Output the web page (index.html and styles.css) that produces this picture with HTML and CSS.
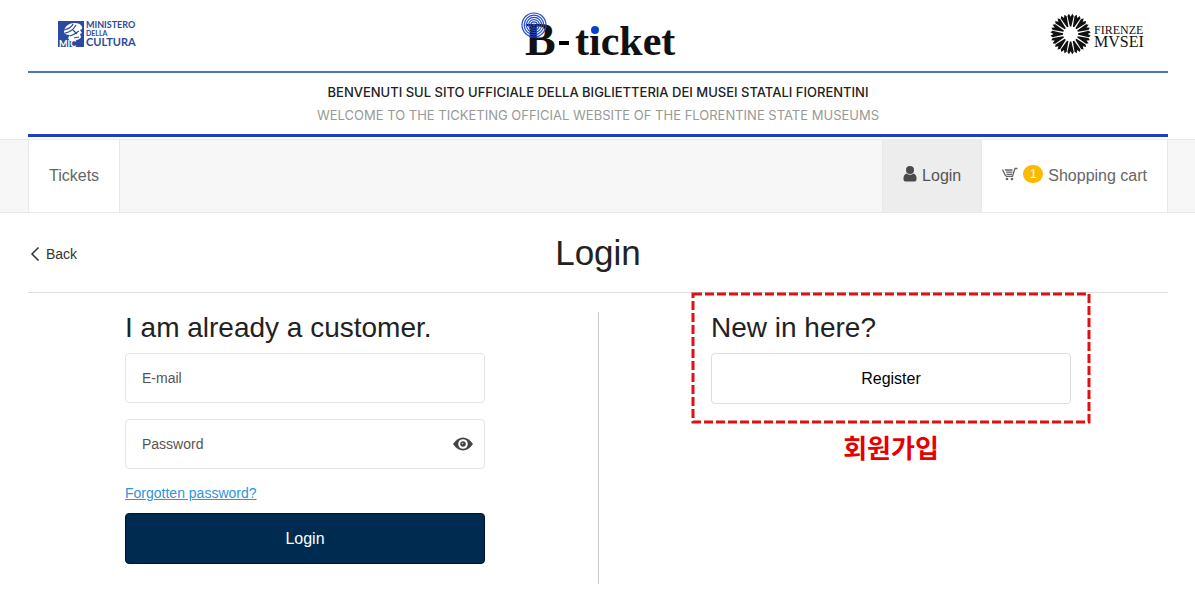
FILE: index.html
```html
<!DOCTYPE html>
<html lang="en">
  <head>
    <meta charset="UTF-8" />
    <meta name="viewport" content="width=device-width, initial-scale=1.0" />
    <title>B-ticket - Login</title>
    <link rel="stylesheet" href="styles.css">
  </head>
  <body>
    <header class="container">
      <div class="logos">
        <svg class="logo-mic" width="90" height="36" viewBox="0 0 90 36" role="img" aria-label="Ministero della Cultura">
          <rect x="6" y="3" width="26" height="26" fill="#2b4ba0" />
          <path d="M12 13c1-5 5-8 11-8 5 0 8 3 7 6l-2 1 2 3-2 1 1 3c-1 3-4 2-6 4h-5l-2-3 2-3c-3 0-6-1-6-4z" fill="#fff" />
          <path d="M12 12c4-1 8-3 9-6M13 15c5-1 9-4 11-8M18 18c4-1 7-4 9-5M21 12l4 4M22 20l5-1" fill="none" stroke="#2b4ba0" stroke-width="1.2" />
          <text class="mic-short" x="7" y="29">MIC</text>
          <text class="mic-small" x="34" y="10">MINISTERO</text>
          <text class="mic-tiny" x="34" y="18">DELLA</text>
          <text class="mic-large" x="34" y="28">CULTURA</text>
        </svg>
        <svg class="logo-ticket" width="160" height="64" viewBox="0 0 160 64" role="img" aria-label="B-ticket">
          <text class="ticket-cap" x="6" y="51">B</text>
          <rect x="40" y="37" width="10" height="4" />
          <text class="ticket-text" x="56" y="51">ticket</text>
          <rect x="70" y="19" width="12" height="11" fill="#fff" />
          <circle cx="76" cy="26" r="4" fill="#0b3fd0" />
          <g fill="none" stroke="#2449d4" stroke-width="1.2">
            <circle cx="15" cy="21" r="12" />
            <circle cx="15" cy="21" r="9.800" />
            <circle cx="15" cy="21" r="7.600" />
            <circle cx="15" cy="21" r="5.400" />
            <circle cx="15" cy="21" r="3.200" />
            <circle cx="15" cy="21" r="1" />
          </g>
        </svg>
        <svg class="logo-firenze" width="96" height="48" viewBox="0 0 96 48" role="img" aria-label="Firenze Musei">
          <defs>
            <path id="ray" d="M19.900 14.500L17.400 4L18.900 1.800L20.600 4.800L22.300 1.800L23.800 4L21.300 14.500z" />
          </defs>
          <g fill="#111">
            <use href="#ray" />
            <use href="#ray" transform="rotate(22.5 20.6 22)" />
            <use href="#ray" transform="rotate(45 20.6 22)" />
            <use href="#ray" transform="rotate(67.5 20.6 22)" />
            <use href="#ray" transform="rotate(90 20.6 22)" />
            <use href="#ray" transform="rotate(112.5 20.6 22)" />
            <use href="#ray" transform="rotate(135 20.6 22)" />
            <use href="#ray" transform="rotate(157.5 20.6 22)" />
            <use href="#ray" transform="rotate(180 20.6 22)" />
            <use href="#ray" transform="rotate(202.5 20.6 22)" />
            <use href="#ray" transform="rotate(225 20.6 22)" />
            <use href="#ray" transform="rotate(247.5 20.6 22)" />
            <use href="#ray" transform="rotate(270 20.6 22)" />
            <use href="#ray" transform="rotate(292.5 20.6 22)" />
            <use href="#ray" transform="rotate(315 20.6 22)" />
            <use href="#ray" transform="rotate(337.5 20.6 22)" />
          </g>
          <text class="firenze-small" x="44" y="22">FIRENZE</text>
          <text class="firenze-large" x="44" y="35">MVSEI</text>
        </svg>
      </div>
      <div class="welcome">
        <p class="welcome-it">BENVENUTI SUL SITO UFFICIALE DELLA BIGLIETTERIA DEI MUSEI STATALI FIORENTINI</p>
        <p class="welcome-en">WELCOME TO THE TICKETING OFFICIAL WEBSITE OF THE FLORENTINE STATE MUSEUMS</p>
      </div>
    </header>

    <nav class="navbar">
      <div class="container nav-items">
        <a class="nav-link" href="#">Tickets</a>
        <a class="nav-link active" href="#">
          <svg class="nav-icon" width="14" height="16" viewBox="0 0 14 16" fill="#4a4a4a" aria-hidden="true">
            <circle cx="7" cy="4" r="4" />
            <path d="M3.500 7.500Q7 10 10.500 7.500Q13.500 8.500 13.500 12v1.500q0 2-2 2h-9q-2 0-2-2V12Q.5 8.500 3.500 7.500z" />
          </svg>
          Login
        </a>
        <a class="nav-link" href="#">
          <svg class="nav-icon" width="16" height="14" viewBox="0 0 16 14" fill="none" stroke="#666" stroke-width="1.300" aria-hidden="true">
            <path d="M15.500 1.500H13L10.500 9.300H4M3 3H10.500M4 5.200H10.500M4.500 7.300H10M.5 2.500L3.800 9.300" />
            <circle cx="5" cy="12" r="1.300" fill="#666" stroke="none" />
            <circle cx="10" cy="12" r="1.300" fill="#666" stroke="none" />
          </svg>
          <span class="badge">1</span>
          Shopping cart
        </a>
      </div>
    </nav>

    <main class="container">
      <div class="title-row">
        <a class="back" href="#">
          <svg width="10" height="14" viewBox="0 0 10 14" fill="none" stroke="#333" stroke-width="1.500" aria-hidden="true">
            <path d="M8.500 .5L2 7l6.500 6.500" />
          </svg>
          Back
        </a>
        <h1>Login</h1>
      </div>

      <div class="columns">
        <section class="column column-login">
          <form class="panel">
            <h2>I am already a customer.</h2>
            <input class="field" type="email" id="email" placeholder="E-mail" aria-label="E-mail" />
            <div class="password">
              <input class="field" type="password" id="password" placeholder="Password" aria-label="Password" />
              <button class="show-password" type="button" aria-label="Show password">
                <svg width="20" height="14" viewBox="0 0 20 14" aria-hidden="true">
                  <path d="M0 7Q4.500 .5 10 .5T20 7Q15.500 13.500 10 13.500T0 7z" fill="#444" />
                  <circle cx="10" cy="7" r="4.800" fill="#fff" />
                  <circle cx="10" cy="7" r="2.800" fill="#444" />
                  <circle cx="9.500" cy="6.500" r=".8" fill="#ccc" />
                </svg>
              </button>
            </div>
            <a class="forgotten" href="#">Forgotten password?</a>
            <button class="button button-primary" type="submit">Login</button>
          </form>
        </section>

        <section class="column">
          <div class="panel highlighted">
            <h2>New in here?</h2>
            <button class="button" type="button">Register</button>
            <svg class="highlight" aria-hidden="true">
              <rect class="highlight-line" width="100%" height="100%" />
            </svg>
          </div>
          <p class="note" lang="ko">회원가입</p>
        </section>
      </div>
    </main>
  </body>
</html>
```

FILE: styles.css
```css
* {
  box-sizing: border-box;
}

body {
  margin: 0;
  font-family: "Liberation Sans", Arial, sans-serif;
  font-size: 14px;
  color: #222;
  background-color: #fff;
}

h1,
h2,
p {
  margin: 0;
  font-weight: normal;
}

a {
  color: inherit;
  text-decoration: none;
}

.container {
  margin: 0 27px 0 28px;
}

/* Header */
.logos {
  display: grid;
  grid-template-columns: 1fr auto 1fr;
  align-items: center;
  height: 73px;
  padding: 0 22px 0 24px;
  border-bottom: 2px solid #4a78b8;
}

.logo-firenze {
  justify-self: end;
}

.logo-mic text {
  font-family: Lato, sans-serif;
  fill: #2b4ba0;
}

.logo-mic .mic-short {
  font-size: 9px;
  font-weight: bold;
  fill: #fff;
}

.mic-small {
  font-size: 9px;
  font-weight: bold;
}

.mic-tiny {
  font-size: 7px;
  font-weight: bold;
}

.mic-large {
  font-size: 11px;
  font-weight: bold;
}

.logo-ticket text {
  font-family: "Liberation Serif", serif;
  font-weight: bold;
  fill: #111;
}

.ticket-cap {
  font-size: 46px;
}

.ticket-text {
  font-size: 42px;
}

.logo-firenze text {
  font-family: "Liberation Serif", serif;
  fill: #111;
}

.firenze-small {
  font-size: 12px;
}

.firenze-large {
  font-size: 16px;
}

.welcome {
  padding: 8px 0 7px;
  border-bottom: 3px solid #1a3fc4;
  font-family: Inter, sans-serif;
  font-size: 13px;
  line-height: 23px;
  text-align: center;
}

.welcome-it {
  color: #222;
  font-weight: 500;
}

.welcome-en {
  color: #999;
}

/* Navigation */
.navbar {
  margin-top: 2px;
  border: 1px solid #e8e8e8;
  border-width: 1px 0;
  background-color: #f7f7f7;
}

.nav-items {
  display: flex;
}

.nav-link {
  display: flex;
  align-items: center;
  gap: 5px;
  height: 72px;
  padding: 0 20px;
  border: 1px solid #e8e8e8;
  border-width: 0 1px;
  background-color: #fff;
  font-size: 16px;
  color: #666;
}

.nav-link.active {
  margin-left: auto;
  border-right: none;
  background-color: #ededed;
  color: #555;
}

.nav-icon {
  margin-bottom: 4px;
}

.badge {
  width: 20px;
  margin-bottom: 4px;
  border-radius: 10px;
  background-color: #fdb900;
  color: #fff;
  font-size: 13px;
  line-height: 18px;
  text-align: center;
}

/* Title */
.title-row {
  display: grid;
  grid-template-columns: 1fr auto 1fr;
  align-items: center;
  height: 80px;
  border-bottom: 1px solid #ddd;
}

.back {
  display: flex;
  align-items: center;
  gap: 6px;
  padding: 2px 0 0 2px;
  color: #333;
}

h1 {
  font-size: 35px;
}

/* Columns */
.columns {
  display: grid;
  grid-template-columns: 1fr 1fr;
  padding: 19px 0 0 2px;
}

.column {
  min-height: 272px;
  padding: 0 0 20px 112px;
}

.column-login {
  display: flex;
  justify-content: flex-end;
  padding: 0 113px 20px 0;
  border-right: 1px solid #ccc;
}

.panel {
  display: flex;
  flex-direction: column;
  width: 100%;
  max-width: 360px;
}

h2 {
  margin-bottom: 9px;
  font-size: 28px;
  line-height: 32px;
}

.field {
  width: 100%;
  height: 50px;
  padding: 0 16px;
  border: 1px solid #e5e5e5;
  border-radius: 4px;
  font-family: inherit;
  font-size: 14px;
  color: #333;
}

.field::placeholder {
  color: #555;
}

.password {
  position: relative;
  margin-top: 16px;
}

.show-password {
  position: absolute;
  top: 18px;
  right: 12px;
  display: flex;
  padding: 0;
  border: none;
  background: none;
  cursor: pointer;
}

.forgotten {
  align-self: flex-start;
  margin: 16px 0 12px;
  color: #2e93e0;
  line-height: 16px;
  text-decoration: underline;
}

.button {
  height: 51px;
  border: 1px solid #ddd;
  border-radius: 4px;
  background-color: #fff;
  color: #000;
  font-family: inherit;
  font-size: 16px;
  cursor: pointer;
}

.button-primary {
  border-color: #001530;
  background-color: #002b50;
  color: #fff;
}

/* Marked area */
.highlighted {
  position: relative;
}

.highlight {
  position: absolute;
  top: -18px;
  left: -18px;
  width: calc(100% + 36px);
  height: calc(100% + 36px);
  overflow: visible;
  pointer-events: none;
}

.highlight-line {
  fill: none;
  stroke: #e01010;
  stroke-width: 3px;
  stroke-dasharray: 9px 3px;
}

.note {
  max-width: 360px;
  margin-top: 25px;
  color: #e60000;
  font-family: "Noto Sans CJK KR", sans-serif;
  font-size: 26px;
  font-weight: bold;
  line-height: 36px;
  text-align: center;
}
```
